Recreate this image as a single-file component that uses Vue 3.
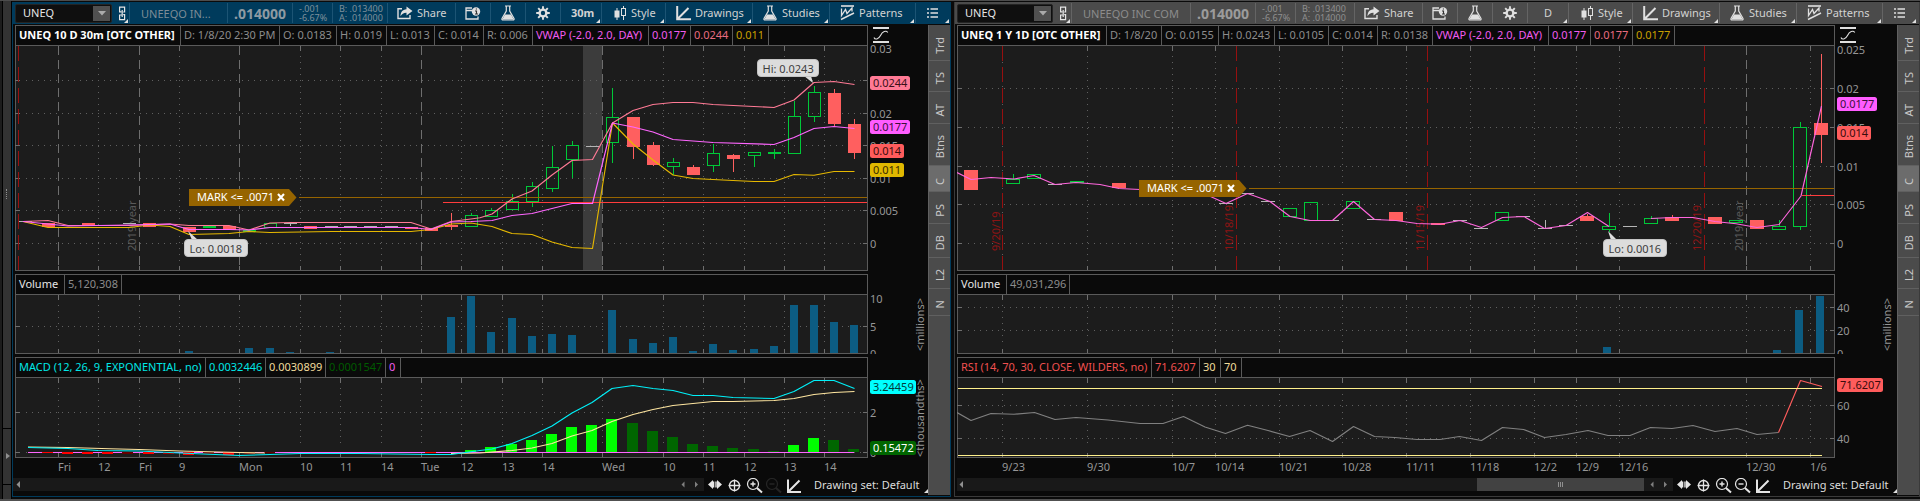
<script setup>
const sideTabs = [
  ['Trd', 36], ['TS', 31], ['AT', 32], ['Btns', 42], ['C', 26], ['PS', 32], ['DB', 34], ['L2', 31], ['N', 27],
]

const left = {
  id: 'intraday',
  active: true,
  name: 'UNEEQO IN...',
  nameWidth: 98,
  timeframe: '30m',
  x0: 15,
  plotWidth: 853,
  legend: [
    ['UNEQ 10 D 30m [OTC OTHER]', 165, 'title'], ['D: 1/8/20 2:30 PM', 99, ''], ['O: 0.0183', 57, ''],
    ['H: 0.019', 50, ''], ['L: 0.013', 48, ''], ['C: 0.014', 49, ''], ['R: 0.006', 49, ''],
    ['VWAP (-2.0, 2.0, DAY)', 116, 'magenta'], ['0.0177', 42, 'magenta'], ['0.0244', 42, 'pink'], ['0.011', 36, 'gold'],
  ],
  volume: [['Volume', 49, 'white'], ['5,120,308', 57, '']],
  study: [
    ['MACD (12, 26, 9, EXPONENTIAL, no)', 190, 'cyan'], ['0.0032446', 60, 'cyan'], ['0.0030899', 60, 'cream'],
    ['0.0001547', 60, 'green'], ['0', 15, 'magenta'],
  ],
  dates: [
    [58, 'Fri'], [98, '12'], [139, 'Fri'], [179, '9'], [239, 'Mon'], [300, '10'], [340, '11'], [381, '14'], [421, 'Tue'],
    [461, '12'], [502, '13'], [542, '14'], [602, 'Wed'], [663, '10'], [703, '11'], [744, '12'], [784, '13'], [824, '14'],
  ],
  dashed: [58, 139, 239, 421, 602],
  red: [18],
  redLabels: [],
  yearX: 136,
  grid: [80, 113, 145, 178, 210, 243],
  prices: [[49, '0.03'], [114, '0.02'], [146, '0.015'], [179, '0.01'], [211, '0.005'], [244, '0']],
  badges: [[76, '0.0244', 40, '#ff7a95', '#3a1018'], [120, '0.0177', 40, '#ff5cff', '#3a103a'], [144, '0.014', 34, '#ff5c5c', '#3a0c0c'], [163, '0.011', 34, '#e0b800', '#3a2c00']],
  candleWidth: 13,
  candles: [
    [26, 0, 221, 222, 0, 'n'], [48.5, 0, 223, 227, 0, 'r'], [88.5, 0, 223, 226, 0, 'r'], [129.5, 0, 223, 224, 0, 'n'],
    [149.5, 0, 223, 227, 0, 'r'], [189.5, 0, 227, 232, 0, 'r'], [209.5, 0, 226, 228, 0, 'g'], [229.5, 0, 226, 230, 0, 'r'],
    [249.5, 0, 230, 232, 0, 'g'], [270.5, 0, 223, 228, 0, 'g'], [290.5, 0, 223, 224, 226, 'n'], [310.5, 0, 226, 229, 0, 'r'],
    [331.5, 0, 226, 227, 0, 'n'], [350.5, 0, 226, 227, 0, 'n'], [370.5, 0, 226, 227, 0, 'n'], [391.5, 0, 226, 227, 0, 'n'],
    [411.5, 0, 227, 229, 0, 'r'], [431.5, 0, 228, 231, 0, 'r'], [451.5, 213, 225, 227, 230, 'r'], [471.5, 213, 215, 227, 0, 'g'],
    [491.5, 208, 210, 217, 0, 'g'], [512.5, 194, 201, 210, 0, 'g'], [532.5, 182, 186, 202, 207, 'g'], [552.5, 146, 167, 189, 192, 'g'],
    [572.5, 141, 145, 160, 178, 'g'], [592.5, 0, 146, 147, 0, 'n'], [612.5, 88, 117, 143, 163, 'g'], [633.5, 0, 117, 147, 159, 'r'],
    [653.5, 142, 145, 165, 166, 'r'], [673.5, 158, 162, 167, 175, 'g'], [693.5, 165, 167, 175, 0, 'r'], [713.5, 144, 153, 166, 172, 'g'],
    [733.5, 154, 155, 159, 172, 'r'], [754.5, 0, 152, 156, 167, 'g'], [774.5, 149, 152, 154, 159, 'g'], [794.5, 101, 116, 154, 0, 'g'],
    [814.5, 86, 92, 117, 122, 'g'], [834.5, 89, 93, 124, 126, 'r'], [854.5, 119, 124, 153, 159, 'r'],
  ],
  lines: [
    ['#e6b800', '23,221.5 48,227.5 129,227.5 150,225 170,226.5 189,234.5 229,233.5 249,231.5 270,232.5 331,231.5 411,231.5 431,229.5 451,224 471,223 480,224.5 492,226.5 512,233.5 532,234.5 552,242 572,247.5 592.5,248.5 612.5,123 633,144 653,160 673,175 693,178.5 713,179.5 733,180.5 754,181.5 774,181.5 794,174.5 814,175.3 834,171.5 854.5,171.5'],
    ['#ff7a95', '23,221.5 48,220.5 68,225.5 129,225.5 170,224 189,225.5 229,225.5 249,230 270,223 290,222.5 411,222.5 431,229 451,221.5 471,219 480,217.7 492,214 512,199 532,191 552,175 572,160.5 592.5,159.5 612.5,123 633,110.5 653,104.5 673,102.5 693,102.5 713,104.5 774,107.5 794,100 814,82.5 834,81.5 854.5,84.5'],
    ['#ff66ff', '23,221.5 48,224 68,226 129,225 170,224 189,229.5 229,229.5 249,230 270,227.5 411,227.5 431,229.5 451,222 471,221.5 492,220.5 512,215.5 532,213.5 572,203.5 592.5,203.5 612.5,123 633,127 653,132 673,139.5 713,142.5 774,144.5 794,137.5 814,128.5 834,126.5 854.5,128.5'],
  ],
  band: [583, 19],
  markY: 197,
  markX: 189,
  redLine: [443, 202],
  callouts: [[184, 239, 64, 'Lo: 0.0018', '188,231 192,240 198,240'], [757, 59, 62, 'Hi: 0.0243', '813,83 804,76 811,76']],
  volGrid: [326],
  volLabels: [[299, '10'], [327, '5'], [354, '0']],
  volBars: [
    [185, 351], [245, 348], [266, 348], [286, 352], [326, 352], [447, 317], [467, 296], [487, 332], [508, 318], [528, 336],
    [548, 334], [568, 335], [608, 310], [629, 339], [649, 343], [669, 337], [689, 351], [709, 344], [729, 350], [750, 349],
    [770, 346], [790, 305], [810, 305], [830, 322], [850, 325],
  ],
  studyGrid: [412, 452],
  studyLabels: [[413, '2'], [453, '0']],
  zeroLine: [28, 854, 452],
  bars: [
    [42, 452, 453, '#f00'], [62, 452, 454, '#f00'], [82, 452, 454, '#f00'], [102, 452, 454, '#f00'], [122, 452, 454, '#600'],
    [143, 452, 454, '#f00'], [163, 452, 454, '#a00'], [183, 452, 455, '#f00'], [203, 452, 454, '#600'], [223, 452, 455, '#f00'],
    [244, 452, 454, '#600'], [264, 452, 453, '#600'], [425, 452, 453, '#f00'], [465, 450, 452, '#0f0'], [485, 447, 452, '#0f0'],
    [506, 444, 452, '#0f0'], [526, 440, 452, '#0f0'], [546, 434, 452, '#0f0'], [566, 427, 452, '#0f0'], [586, 425, 452, '#0f0'],
    [606, 419, 452, '#0f0'], [627, 423, 452, '#060'], [647, 431, 452, '#060'], [667, 437, 452, '#060'], [687, 444, 452, '#060'],
    [707, 446, 452, '#060'], [727, 448, 452, '#060'], [748, 449, 452, '#060'], [768, 451, 452, '#060'], [788, 445, 452, '#0f0'],
    [808, 438, 452, '#0f0'], [828, 440, 452, '#060'], [848, 449, 452, '#060'],
  ],
  studyLines: [
    ['#ffe6a0', '28,447 68,447.5 110,448.8 139,449.5 180,451 239,452.5 265,453'],
    ['#ffe6a0', '451,453.5 480,453 512,450.5 532,448 552,443.5 572,436 592,430.5 612,421.5 633,414.5 653,409.5 673,405.5 693,403.5 713,401.5 733,401.5 774,400.5 794,398.5 814,394.5 834,392.5 854.5,391.5'],
    ['#00f0f8', '28,447.5 68,448.5 98,450.5 139,451 180,453 239,455.5 270,454.5 300,453.5 360,453.5 431,454.5 451,454.5 480,450.5 492,449 512,443.5 532,435.5 552,426 572,413 592,402.5 612,388.5 633,385.5 653,388.5 673,390.5 693,395.5 713,395.5 733,397.5 774,398.5 794,391.5 814,380.5 834,380.5 854.5,388.5'],
  ],
  studyBadges: [[380, '3.24459', 46, '#00ffff', '#003c3c'], [441, '0.15472', 46, '#006600', '#ffffff']],
  studyUnit: '<thousandths>',
  thumb: null,
  zoomOutDim: true,
}

const right = {
  id: 'daily',
  active: false,
  name: 'UNEEQO INC COM',
  nameWidth: 119,
  timeframe: 'D',
  x0: 957,
  plotWidth: 878,
  legend: [
    ['UNEQ 1 Y 1D [OTC OTHER]', 149, 'title'], ['D: 1/8/20', 55, ''], ['O: 0.0155', 57, ''], ['H: 0.0243', 56, ''],
    ['L: 0.0105', 54, ''], ['C: 0.014', 49, ''], ['R: 0.0138', 55, ''], ['VWAP (-2.0, 2.0, DAY)', 116, 'magenta'],
    ['0.0177', 42, 'magenta'], ['0.0177', 42, 'pink'], ['0.0177', 42, 'gold'],
  ],
  volume: [['Volume', 49, 'white'], ['49,031,296', 63, '']],
  study: [['RSI (14, 70, 30, CLOSE, WILDERS, no)', 194, 'coral'], ['71.6207', 48, 'coral'], ['30', 21, 'cream'], ['70', 21, 'cream']],
  dates: [
    [1002, '9/23'], [1087, '9/30'], [1172, '10/7'], [1215, '10/14'], [1279, '10/21'], [1342, '10/28'], [1406, '11/11'],
    [1470, '11/18'], [1534, '12/2'], [1576, '12/9'], [1619, '12/16'], [1746, '12/30'], [1810, '1/6'],
  ],
  dashed: [1746],
  red: [1002, 1236, 1427, 1704],
  redLabels: [[1000, '9/20/19'], [1233, '10/18/19'], [1424, '11/15/19'], [1701, '12/20/19']],
  yearX: 1743,
  grid: [88, 127, 166, 204, 243],
  prices: [[50, '0.025'], [89, '0.02'], [128, '0.015'], [167, '0.01'], [205, '0.005'], [244, '0']],
  badges: [[97, '0.0177', 40, '#ff5cff', '#3a103a'], [126, '0.014', 34, '#ff5c5c', '#3a0c0c']],
  candleWidth: 14,
  candles: [
    [971, 0, 170, 190, 0, 'r'], [1013, 174, 179, 184, 0, 'g'], [1034, 0, 174, 179, 0, 'g'], [1055, 0, 184, 185, 0, 'n'],
    [1077, 0, 181, 183, 0, 'g'], [1119, 0, 183, 188, 0, 'r'], [1226, 0, 203, 204, 0, 'n'], [1247, 0, 193, 194, 0, 'n'],
    [1268, 0, 201, 202, 0, 'n'], [1290, 0, 208, 217, 0, 'g'], [1311, 0, 202, 221, 0, 'g'], [1332, 0, 220, 221, 0, 'n'],
    [1353, 0, 201, 209, 0, 'g'], [1374, 0, 219, 220, 0, 'n'], [1396, 0, 212, 221, 0, 'r'], [1438, 0, 223, 225, 0, 'r'],
    [1460, 0, 220, 221, 0, 'n'], [1481, 0, 228, 229, 0, 'n'], [1502, 0, 212, 221, 0, 'g'], [1523, 0, 216, 217, 0, 'n'],
    [1545, 220, 228, 229, 0, 'n'], [1566, 0, 225, 226, 0, 'n'], [1587, 214, 216, 221, 0, 'r'], [1609, 213, 226, 230, 232, 'g'],
    [1630, 0, 226, 227, 0, 'n'], [1651, 216, 218, 224, 0, 'g'], [1672, 215, 217, 221, 0, 'r'], [1715, 0, 217, 224, 0, 'r'],
    [1736, 0, 220, 223, 0, 'g'], [1757, 0, 220, 229, 0, 'r'], [1779, 220, 226, 230, 0, 'g'], [1800, 122, 127, 227, 230, 'g'],
    [1821, 54, 123, 135, 163, 'r'],
  ],
  lines: [
    ['#ff66dd', '957,172.5 971,179.5 991,177.5 1014,179 1034,175.5 1055,184.5 1076,182.5 1100,184.5 1119,188.5 1140,189.5 1180,189.5 1205,194 1226,203.5 1247.5,193.5 1270,201.5 1290,216.5 1310,220.5 1332.5,220.5 1353.5,201.5 1374.5,219.5 1396,220.5 1417,223.5 1440,224.3 1460,220.5 1481.5,227.5 1502.5,217.5 1524,216.5 1544.5,228.5 1566,225.5 1587.5,212.5 1609,226.5'],
    ['#ff66dd', '1651,218.5 1672,217.5 1693,217.5 1715,221.5 1736,223.8 1757,227.5 1779,224.5 1801,196 1821.5,106'],
  ],
  band: null,
  markY: 188,
  markX: 1139,
  redLine: [1802, 195],
  callouts: [[1603, 239, 64, 'Lo: 0.0016', '1608,231 1611,240 1617,240']],
  volGrid: [307, 330],
  volLabels: [[308, '40'], [331, '20'], [354, '0']],
  volBars: [[1603, 347], [1773, 350], [1795, 310], [1816, 296]],
  studyGrid: [405, 438],
  studyLabels: [[406, '60'], [439, '40']],
  zeroLine: null,
  bars: [],
  studyLines: [
    ['#808080', '957,412.5 971,420.5 991,413.5 1014,414.3 1034.5,412.5 1055,419.5 1076,417.5 1108,420 1140,423.5 1163,423.5 1183.5,416.5 1205,427 1225.5,433.5 1247.5,425.3 1268,430.5 1289.5,436.5 1310,430.5 1332.5,441.5 1353.5,426.5 1374.5,436.5 1395,437.5 1417,439.5 1440,439.5 1459.5,436.5 1481.5,440.5 1502.5,427.5 1523.5,429.5 1544.5,437.5 1566,434.5 1588,430.5 1608,435.5 1630,435.5 1650.5,427.5 1672,428.5 1693,425.5 1715,431.5 1737,428.5 1757,434.5 1778.5,432.5'],
    ['#ff5c5c', '1778.5,432.5 1800.5,380.5 1822,386.5'],
    ['#fff08c', '958,388.5 1822,388.5'],
    ['#fff08c', '958,455.5 1822,455.5'],
  ],
  studyBadges: [[378, '71.6207', 46, '#ff5c5c', '#3a0c0c']],
  studyUnit: '',
  thumb: { start: 521, width: 167 },
  zoomOutDim: false,
}

const panels = [left, right]
const colors = { r: '#ff5f5f', g: '#00c838', n: '#b4b4b4' }
const edge = (p) => p.x0 + p.plotWidth - 1
</script>

<template>
  <div class="desk">
    <div class="gutter"><div class="rail"><i class="grip"></i><i class="handle"></i></div></div>
    <section v-for="p in panels" :key="p.id" class="panel" :class="p.id">
      <header class="toolbar">
        <div class="cell symbol">
          <div class="combo"><span>UNEQ</span><b><svg width="8" height="5"><path d="M0 0H8L4 4.5Z" fill="#aaa" /></svg></b></div>
          <svg class="link" width="9" height="15" fill="none" stroke="#e6e6e6" stroke-width="1.2">
            <path d="M3.4 5.8H1.6V1.2H6.6V6H5.2M4 9H1.6V13.6H6.6V8.6H5.2M4.2 4V11" />
          </svg>
          <i class="corner"></i>
        </div>
        <div class="cell name" :style="{ width: p.nameWidth + 'px' }">{{ p.name }}</div>
        <div class="cell price">.014000</div>
        <div class="cell change"><span>-.001</span><span>-6.67%</span></div>
        <div class="cell quote"><span>B: .013400</span><span>A: .014000</span></div>
        <div class="cell share">
          <svg width="16" height="14"><path d="M5 2.7H1V12.5H13V9" fill="none" stroke="#e0e0e0" stroke-width="1.4" /><path d="M9.5 0.5L15.5 5L9.5 9.5V6.8C6.5 6.7 5 8 3.5 10.3C3.6 6 5.5 3.5 9.5 3.2Z" fill="#e0e0e0" /></svg>
          <span>Share</span>
        </div>
        <div class="cell tool info">
          <svg width="16" height="13"><path d="M7 1H1V12H13V9.5M1 3.5H7" fill="none" stroke="#e0e0e0" stroke-width="1.3" /><circle cx="11" cy="4.5" r="4.2" fill="#e0e0e0" /><path d="M10 4H11.5V7M10 7H13M10.8 2H12" stroke="#333" fill="none" stroke-width="1.1" /></svg>
        </div>
        <div class="cell tool flask">
          <svg width="14" height="16"><path d="M4 1H10M5.3 1V6L1 13.5Q.6 15 2 15H12Q13.4 15 13 13.5L8.7 6V1" fill="none" stroke="#e0e0e0" stroke-width="1.2" /><path d="M4 9.5H10L12.8 14.6H1.2Z" fill="#e0e0e0" /></svg>
        </div>
        <div class="cell tool gear">
          <svg width="14" height="14" viewBox="-7 -7 14 14"><circle r="3.4" fill="none" stroke="#e0e0e0" stroke-width="2.4" /><path d="M0-6.8V-4M0 4V6.8M-6.8 0H-4M4 0H6.8M-4.8-4.8L-3-3M3 3L4.8 4.8M-4.8 4.8L-3 3M3-3L4.8-4.8" stroke="#e0e0e0" stroke-width="1.9" /></svg>
        </div>
        <div class="cell frame"><span>{{ p.timeframe }}</span><i class="corner"></i></div>
        <div class="cell style">
          <svg width="13" height="14"><path d="M3 2V14M9.5 0V14" stroke="#e0e0e0" /><rect x="0.5" y="4.5" width="5" height="7" fill="#e0e0e0" /><rect x="7.5" y="2.5" width="4" height="7" :fill="p.active ? '#003b5c' : '#4b4b4b'" stroke="#e0e0e0" /></svg>
          <span>Style</span><i class="corner"></i>
        </div>
        <div class="cell drawings">
          <svg width="15" height="15"><path d="M1.2 0V13.2H15M1.8 12.8L12.5 2" fill="none" stroke="#e0e0e0" stroke-width="2" /></svg>
          <span>Drawings</span><i class="corner"></i>
        </div>
        <div class="cell studies">
          <svg width="14" height="16"><path d="M4 1H10M5.3 1V6L1 13.5Q.6 15 2 15H12Q13.4 15 13 13.5L8.7 6V1" fill="none" stroke="#e0e0e0" stroke-width="1.2" /><path d="M4 9.5H10L12.8 14.6H1.2Z" fill="#e0e0e0" /></svg>
          <span>Studies</span><i class="corner"></i>
        </div>
        <div class="cell patterns">
          <svg width="15" height="16" fill="none" stroke="#e0e0e0"><path d="M1 1H14" stroke-width="1.6" /><path d="M1.5 3.5V10.5L5.5 4.5L7 8.5L12 3V6.5" stroke-width="1.3" /><path d="M1 14.5L14 8" stroke-width="1.5" /></svg>
          <span>Patterns</span><i class="corner"></i>
        </div>
        <div class="cell list">
          <svg width="12" height="10" stroke="#e0e0e0"><path d="M0 1H2M0 5H2M0 9H2M3.5 1H11M3.5 5H11M3.5 9H11" stroke-width="1.4" /></svg>
          <i class="corner"></i>
        </div>
      </header>

      <div class="body">
        <div class="charts">
          <div class="legend-row">
            <div class="legend" :style="{ width: p.plotWidth + 'px' }">
              <span v-for="(c, i) in p.legend" :key="i" :class="c[2]" :style="{ width: c[1] + 'px' }">{{ c[0] }}</span>
            </div>
            <svg class="mode" width="16" height="16" fill="none" stroke="#e0e0e0"><path d="M0 1H16M0 15H16" stroke-width="2" /><path d="M1 10.5C2 13 5.5 12.5 7.5 8.5S13 3 14.8 5.5" stroke-width="1.1" /></svg>
          </div>

          <svg class="plot" :width="p.plotWidth + 61" height="229" :viewBox="`${p.x0} 45 ${p.plotWidth + 61} 229`">
            <rect :x="p.x0 + 0.5" y="45.5" :width="p.plotWidth - 1" height="225" class="area" />
            <rect v-if="p.band" :x="p.band[0]" y="46" :width="p.band[1]" height="224" fill="#3c3c3c" />
            <g class="dots">
              <line v-for="y in p.grid" :key="y" :x1="p.x0 + 11" :x2="edge(p) - 4" :y1="y + 0.5" :y2="y + 0.5" />
              <template v-for="d in p.dates" :key="d[0]">
                <line v-if="!p.dashed.includes(d[0])" :x1="d[0] + 0.5" :x2="d[0] + 0.5" y1="56" y2="265" />
              </template>
            </g>
            <g class="ticks">
              <path v-for="y in p.grid" :key="y" :d="`M${p.x0} ${y + 0.5}h5M${edge(p) - 4} ${y + 0.5}h4`" />
              <template v-for="d in p.dates" :key="d[0]">
                <path v-if="!p.red.includes(d[0])" :d="`M${d[0] + 0.5} 46v5M${d[0] + 0.5} 266v4`" />
              </template>
            </g>
            <line v-for="x in p.dashed" :key="x" :x1="x + 0.5" :x2="x + 0.5" y1="46" y2="270" class="dashed" />
            <line v-for="x in p.red" :key="x" :x1="x + 0.5" :x2="x + 0.5" y1="46" y2="270" class="expiry" />
            <text v-for="l in p.redLabels" :key="l[0]" class="expiry-text" :transform="`translate(${l[0]} 251) rotate(-90)`">{{ l[1] }}</text>
            <text class="year" :transform="`translate(${p.yearX} 251) rotate(-90)`">2019 year</text>

            <g shape-rendering="crispEdges">
              <g v-for="(c, i) in p.candles" :key="i">
                <path v-if="c[1]" :d="`M${Math.floor(c[0]) + 0.5} ${c[1]}V${c[2]}`" :stroke="colors[c[5]]" />
                <path v-if="c[4]" :d="`M${Math.floor(c[0]) + 0.5} ${c[3]}V${c[4]}`" :stroke="colors[c[5]]" />
                <rect v-if="c[5] === 'g'" :x="Math.floor(c[0] - p.candleWidth / 2) + 0.5" :y="c[2] + 0.5" :width="p.candleWidth - 1" :height="Math.max(c[3] - c[2] - 1, 1)" fill="none" :stroke="colors.g" />
                <rect v-else :x="Math.floor(c[0] - p.candleWidth / 2)" :y="c[2]" :width="p.candleWidth" :height="c[3] - c[2]" :fill="colors[c[5]]" />
              </g>
              <line :x1="p.markX + 110" :x2="edge(p)" :y1="p.markY + 0.5" :y2="p.markY + 0.5" stroke="#966400" />
              <line :x1="p.redLine[0]" :x2="edge(p)" :y1="p.redLine[1] + 0.5" :y2="p.redLine[1] + 0.5" stroke="#ff3c3c" />
            </g>
            <polyline v-for="(l, i) in p.lines" :key="i" :points="l[1]" :stroke="l[0]" class="curve" />

            <g :transform="`translate(${p.markX} ${p.markY - 8})`">
              <path d="M0 0H100L107.5 8.5L100 17H0Z" fill="#966400" />
              <text x="8" y="12" class="tag">MARK &lt;= .0071</text>
              <path d="M89 5L95 11.5M95 5L89 11.5" stroke="#fff" stroke-width="2.1" />
            </g>
            <g v-for="c in p.callouts" :key="c[3]">
              <polygon :points="c[4]" fill="#dcdcdc" />
              <rect :x="c[0] + 0.5" :y="c[1] + 0.5" :width="c[2] - 1" height="17" rx="3.5" fill="#dcdcdc" stroke="#c4c4c4" />
              <text :x="c[0] + 5.5" :y="c[1] + 14" class="note">{{ c[3] }}</text>
            </g>

            <text v-for="l in p.prices" :key="l[0]" :x="edge(p) + 3" :y="l[0] + 4" class="axis">{{ l[1] }}</text>
            <g v-for="b in p.badges" :key="b[0]">
              <rect :x="edge(p) + 3" :y="b[0]" :width="b[2]" height="14" rx="2.5" :fill="b[3]" />
              <text :x="edge(p) + 6" :y="b[0] + 11" class="badge" :fill="b[4]">{{ b[1] }}</text>
            </g>
          </svg>

          <div class="legend" :style="{ width: p.plotWidth + 'px' }">
            <span v-for="(c, i) in p.volume" :key="i" :class="c[2]" :style="{ width: c[1] + 'px' }">{{ c[0] }}</span>
          </div>
          <svg class="plot" :width="p.plotWidth + 61" height="63" :viewBox="`${p.x0} 294 ${p.plotWidth + 61} 63`">
            <clipPath :id="'vol-' + p.id"><rect :x="p.x0" y="294" :width="p.plotWidth + 61" height="60" /></clipPath>
            <rect :x="p.x0 + 0.5" y="294.5" :width="p.plotWidth - 1" height="59" class="area" />
            <g class="dots">
              <line v-for="y in p.volGrid" :key="y" :x1="p.x0 + 11" :x2="edge(p) - 4" :y1="y + 0.5" :y2="y + 0.5" />
              <line v-for="d in p.dates" :key="d[0]" :x1="d[0] + 0.5" :x2="d[0] + 0.5" y1="305" y2="347" />
            </g>
            <g class="ticks">
              <path v-for="y in p.volGrid" :key="y" :d="`M${p.x0} ${y + 0.5}h5M${edge(p) - 4} ${y + 0.5}h4`" />
              <path v-for="d in p.dates" :key="d[0]" :d="`M${d[0] + 0.5} 295v5M${d[0] + 0.5} 349v4`" />
            </g>
            <rect v-for="b in p.volBars" :key="b[0]" :x="b[0]" :y="b[1]" width="8" :height="353 - b[1]" fill="#0c5c82" />
            <g :clip-path="`url(#vol-${p.id})`">
              <text v-for="l in p.volLabels" :key="l[0]" :x="edge(p) + 3" :y="l[0] + 4" class="axis">{{ l[1] }}</text>
            </g>
            <text class="unit" :transform="`translate(${edge(p) + 57} 351) rotate(-90)`">&lt;millions&gt;</text>
          </svg>

          <div class="legend" :style="{ width: p.plotWidth + 'px' }">
            <span v-for="(c, i) in p.study" :key="i" :class="c[2]" :style="{ width: c[1] + 'px' }">{{ c[0] }}</span>
          </div>
          <svg class="plot" :width="p.plotWidth + 61" height="101" :viewBox="`${p.x0} 377 ${p.plotWidth + 61} 101`">
            <rect :x="p.x0 + 0.5" y="377.5" :width="p.plotWidth - 1" height="80" class="area" />
            <g class="dots">
              <line v-for="y in p.studyGrid" :key="y" :x1="p.x0 + 11" :x2="edge(p) - 4" :y1="y + 0.5" :y2="y + 0.5" />
              <line v-for="d in p.dates" :key="d[0]" :x1="d[0] + 0.5" :x2="d[0] + 0.5" y1="388" y2="448" />
            </g>
            <g class="ticks">
              <path v-for="y in p.studyGrid" :key="y" :d="`M${p.x0} ${y + 0.5}h5M${edge(p) - 4} ${y + 0.5}h4`" />
              <path v-for="d in p.dates" :key="d[0]" :d="`M${d[0] + 0.5} 378v5M${d[0] + 0.5} 453v4`" />
            </g>
            <rect v-if="p.zeroLine" :x="p.zeroLine[0]" :y="p.zeroLine[2]" :width="p.zeroLine[1] - p.zeroLine[0]" height="1" fill="#ff66ff" />
            <rect v-for="b in p.bars" :key="b[0]" :x="b[0]" :y="b[1]" width="11" :height="b[2] - b[1]" :fill="b[3]" />
            <polyline v-for="(l, i) in p.studyLines" :key="i" :points="l[1]" :stroke="l[0]" class="curve" />
            <text v-for="l in p.studyLabels" :key="l[0]" :x="edge(p) + 3" :y="l[0] + 4" class="axis">{{ l[1] }}</text>
            <text v-if="p.studyUnit" class="unit" :transform="`translate(${edge(p) + 57} 457) rotate(-90)`">{{ p.studyUnit }}</text>
            <g v-for="b in p.studyBadges" :key="b[0]">
              <rect :x="edge(p) + 3" :y="b[0]" :width="b[2]" height="14" rx="2.5" :fill="b[3]" />
              <text :x="edge(p) + 6" :y="b[0] + 11" class="badge" :fill="b[4]">{{ b[1] }}</text>
            </g>
            <text v-for="d in p.dates" :key="d[0]" :x="d[0]" y="471" class="axis">{{ d[1] }}</text>
          </svg>

          <footer class="bottom">
            <div class="scroll">
              <svg width="5" height="7"><path d="M4 0V7L0.5 3.5Z" fill="#909090" /></svg>
              <div class="track"><div v-if="p.thumb" class="thumb" :style="{ marginLeft: p.thumb.start - 8 + 'px', width: p.thumb.width + 'px' }"><i></i><i></i><i></i></div></div>
              <svg width="18" height="7"><path d="M3.5 0.5V6.5L0.5 3.5ZM14 0.5V6.5L17 3.5Z" fill="#808080" /></svg>
            </div>
            <svg class="acts" width="93" height="16" fill="none" stroke="#e6e6e6">
              <path d="M0 6.5L5 2V11ZM14 6.5L9 2V11Z" fill="#e6e6e6" stroke="none" /><path d="M5.5 3.5V9.5M7.2 3.5V9.5M8.8 3.5V9.5" stroke-width="1" />
              <circle cx="26.5" cy="7.5" r="5" stroke-width="1.3" /><path d="M20.5 7.5H32.5M26.5 1.5V13.5" stroke-width="1.3" />
              <circle cx="45" cy="6" r="5.5" stroke-width="1.2" /><path d="M42.5 6H47.5M45 3.5V8.5" stroke-width="1.4" /><path d="M49 10L54 14.5" stroke-width="2" />
              <g :opacity="p.zoomOutDim ? 0.12 : 1"><circle cx="64" cy="6" r="5.5" stroke-width="1.2" /><path d="M61.5 6H66.5" stroke-width="1.4" /><path d="M68 10L73 14.5" stroke-width="2" /></g>
              <path d="M80 1.5V14H93M80.5 13.5L91.5 2.5" stroke-width="2" />
            </svg>
            <span class="set">Drawing set: Default</span>
            <i class="corner"></i>
          </footer>
        </div>

        <nav class="tabs">
          <div v-for="t in sideTabs" :key="t[0]" :class="{ on: t[0] === 'C' }" :style="{ height: t[1] + 'px' }"><span>{{ t[0] }}</span></div>
        </nav>
      </div>
    </section>
  </div>
</template>

<style>
html,
body {
  height: 501px;
  background: #0a0a0a;
  overflow: hidden;
}
</style>

<style scoped>
.desk {
  box-sizing: border-box;
  display: flex;
  width: 1920px;
  height: 501px;
  overflow: hidden;
  border-top: 1px solid #4c4c4c;
  border-bottom: 2px solid #505050;
  background: #0a0a0a;
  font-family: "Noto Sans", "Open Sans", sans-serif;
  font-size: 11px;
  color: #8c8c8c;
}
.gutter {
  box-sizing: border-box;
  width: 12px;
  padding: 0 1px 0 3px;
  border-left: 2px solid #1c1c1c;
  background: #000;
}
.gutter .rail {
  position: relative;
  height: 100%;
  margin-left: -2px;
  background: #333;
}
.grip {
  position: absolute;
  left: 3px;
  top: 188px;
  height: 10px;
  border-left: 1px dotted #909090;
}
.handle {
  position: absolute;
  left: 0;
  top: 427px;
  width: 8px;
  height: 55px;
  border-top: 1px solid #000;
  border-bottom: 1px solid #000;
}
.handle::after {
  content: "";
  position: absolute;
  left: 3px;
  top: 24px;
  border: 3px solid transparent;
  border-left: 4px solid #909090;
  border-right: 0;
}
.panel {
  box-sizing: border-box;
  height: 495px;
  margin-top: 1px;
  border: 1px solid #003b5c;
  border-top: 0;
  background: #0a0a0a;
}
.intraday {
  width: 939px;
  padding-left: 2px;
}
.daily {
  width: 966px;
  margin-left: 3px;
  padding-left: 2px;
  border-color: #3a3a3a;
}
.toolbar {
  display: flex;
  height: 22px;
  margin: 0 0 1px -2px;
  padding-left: 2px;
  background: #003b5c;
  color: #d2d2d2;
}
.daily .toolbar {
  background: #4b4b4b;
}
.cell {
  box-sizing: border-box;
  position: relative;
  display: flex;
  align-items: center;
  height: 20px;
  margin-top: 1px;
  border-left: 1px solid #1c5474;
  flex: none;
  white-space: nowrap;
}
.daily .cell {
  border-left-color: #646464;
}
.cell span {
  position: relative;
  line-height: 20px;
}
.cell.symbol {
  width: 114px;
  border-left: 0;
}
.combo {
  box-sizing: border-box;
  display: flex;
  align-items: center;
  width: 97px;
  height: 19px;
  padding: 1px 1px 1px 7px;
  border: 1px solid #242424;
  background: #0f0f0f;
  border-radius: 2px;
  color: #e6e6e6;
}
.daily .combo {
  width: 96px;
}
.combo span {
  flex: 1;
}
.combo b {
  display: flex;
  align-items: center;
  justify-content: center;
  width: 17px;
  height: 15px;
  background: #505050;
}
.link {
  margin-left: 6px;
}
.corner {
  position: absolute;
  right: 1px;
  bottom: 0;
  border-left: 4px solid transparent;
  border-bottom: 4px solid #e0e0e0;
}
.name {
  padding-left: 11px;
  color: #7d8c96;
}
.daily .name {
  color: #8c8c8c;
}
.price {
  width: 65px;
  padding-left: 6px;
  font-size: 14px;
  font-weight: bold;
  color: #8e9aa2;
}
.daily .price {
  color: #9b9b9b;
}
.cell.change,
.cell.quote {
  width: 40px;
  padding-left: 6px;
  flex-direction: column;
  align-items: flex-start;
  justify-content: center;
  font-size: 9px;
  color: #7e909b;
}
.cell.quote {
  width: 55px;
}
.daily .change,
.daily .quote {
  color: #8f8f8f;
}
.daily .quote {
  margin-right: 4px;
}
.cell.change span,
.cell.quote span {
  line-height: 9px;
}
.share {
  width: 68px;
  padding-left: 9px;
  gap: 4px;
}
.tool {
  width: 35px;
  justify-content: center;
}
.frame {
  width: 41px;
  padding-left: 10px;
  font-weight: bold;
}
.daily .frame {
  padding-left: 16px;
  font-weight: normal;
}
.style {
  width: 64px;
  padding-left: 12px;
  gap: 4px;
}
.drawings {
  width: 87px;
  padding-left: 10px;
  gap: 4px;
}
.studies {
  width: 77px;
  padding-left: 10px;
  gap: 5px;
}
.patterns {
  width: 86px;
  padding-left: 10px;
  gap: 4px;
}
.list {
  width: 35px;
  padding-left: 11px;
}
.body {
  display: flex;
  height: 470px;
}
.charts {
  flex: 1;
  min-width: 0;
}
.legend-row {
  display: flex;
}
.legend {
  box-sizing: border-box;
  display: flex;
  height: 20px;
  border: 1px solid #5a5a5a;
  border-bottom: 0;
  background: #0a0a0a;
}
.legend span {
  box-sizing: border-box;
  padding-left: 3px;
  border-right: 1px solid #5a5a5a;
  line-height: 17px;
  white-space: nowrap;
  flex: none;
}
.legend .title {
  color: #fff;
  font-weight: bold;
}
.legend .white {
  color: #e6e6e6;
}
.legend .magenta {
  color: #f05cf0;
}
.legend .pink {
  color: #e86c80;
}
.legend .gold {
  color: #c8a000;
}
.legend .cyan {
  color: #00e6e6;
}
.legend .cream {
  color: #f0dc9c;
}
.legend .green {
  color: #005a00;
}
.legend .coral {
  color: #f05050;
}
.mode {
  margin: 2px 0 0 5px;
}
.plot {
  display: block;
}
.area {
  fill: #1c1c1c;
  stroke: #5a5a5a;
  shape-rendering: crispEdges;
}
.dots {
  stroke: #606060;
  stroke-dasharray: 1 5;
  shape-rendering: crispEdges;
}
.ticks {
  stroke: #6e6e6e;
  fill: none;
  shape-rendering: crispEdges;
}
.dashed {
  stroke: #6e6e6e;
  stroke-dasharray: 9 5;
  shape-rendering: crispEdges;
}
.expiry {
  stroke: #961010;
  stroke-dasharray: 15 6;
  shape-rendering: crispEdges;
}
.curve {
  fill: none;
  stroke-width: 1.15;
  stroke-linejoin: round;
}
.expiry-text {
  fill: #8c1414;
}
.year {
  fill: #5a5a5a;
}
.axis,
.unit {
  fill: #969696;
}
.tag {
  fill: #fff;
}
.note {
  fill: #3c3c3c;
}
.bottom {
  position: relative;
  display: flex;
  height: 16px;
}
.scroll {
  display: flex;
  align-items: center;
  flex: 1;
  height: 13px;
  margin-left: -2px;
  padding: 0 5px 0 3px;
  background: #191919;
}
.daily .scroll {
  margin-left: 0;
  padding-left: 2px;
}
.track {
  flex: 1;
}
.thumb {
  display: flex;
  align-items: center;
  justify-content: center;
  gap: 1px;
  height: 13px;
  background: #424242;
}
.thumb i {
  width: 1px;
  height: 5px;
  background: #909090;
}
.acts {
  margin-left: 4px;
}
.set {
  width: 114px;
  margin-left: 13px;
  line-height: 14px;
  color: #dcdcdc;
  white-space: nowrap;
}
.bottom .corner {
  right: 0;
  bottom: 1px;
}
.tabs {
  width: 22px;
  border-left: 1px solid #606060;
  box-sizing: border-box;
  background: #4b4b4b;
  color: #c8c8c8;
}
.tabs div {
  box-sizing: border-box;
  display: flex;
  align-items: center;
  justify-content: center;
  padding-top: 5px;
  border-bottom: 1px solid #606060;
}
.tabs .on {
  background: #6c6c6c;
}
.tabs span {
  writing-mode: vertical-rl;
  transform: rotate(180deg);
}
</style>
